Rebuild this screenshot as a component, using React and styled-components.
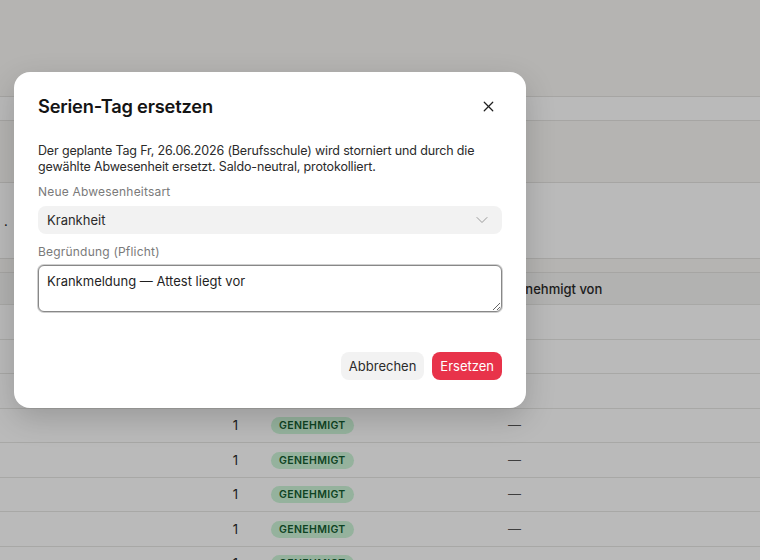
import { X, ChevronDown } from 'lucide-react'
import styled, { createGlobalStyle } from 'styled-components'

const GlobalStyle = createGlobalStyle`
	html, body {
		margin: 0;
		padding: 0;
	}
	body {
		font-family: Inter, 'Noto Sans', 'Liberation Sans', sans-serif;
		color: #1f1f1f;
		-webkit-font-smoothing: antialiased;
	}
	* {
		box-sizing: border-box;
	}
`

const StyledPage = styled.div`
	position: relative;
	width: 760px;
	height: 560px;
	overflow: hidden;
	background: #f8f7f4;
	.Spacer {
		height: 96px;
	}
`

const Strip = styled.div`
	height: ${(p) => p.height}px;
	margin-bottom: ${(p) => p.gap || 0}px;
	background: #ffffff;
	border-top: 1px solid #e4e3e0;
	border-bottom: 1px solid #e4e3e0;
	display: flex;
	align-items: center;
	padding-left: 4px;
	font-size: 13px;
	color: #222;
`

const Table = styled.div`
	background: #ffffff;
	border-top: 1px solid #e4e3e0;
`

const Row = styled.div`
	display: grid;
	grid-template-columns: 256px 236px 1fr;
	align-items: center;
	height: ${(p) => (p.head ? 32 : 34.5)}px;
	background: ${(p) => (p.head ? '#f4f4f3' : '#ffffff')};
	border-bottom: 1px solid #e6e6e4;
	font-size: 13px;
	font-weight: ${(p) => (p.head ? 500 : 400)};
	color: #2a2a2a;
	.num {
		text-align: right;
		padding-right: 18px;
	}
	.status {
		padding-left: 15px;
	}
	.by {
		padding-left: 16px;
		color: ${(p) => (p.head ? '#2a2a2a' : '#555')};
	}
`

const Badge = styled.span`
	display: inline-block;
	padding: 2px 8px;
	border-radius: 999px;
	background: #ccf5d8;
	color: #155c30;
	font-size: 10.5px;
	font-weight: 600;
	letter-spacing: 0.35px;
	line-height: 13px;
`

const Overlay = styled.div`
	position: absolute;
	inset: 0;
	background: rgba(0, 0, 0, 0.27);
`

const Modal = styled.div`
	position: absolute;
	left: 14px;
	top: 72px;
	width: 512px;
	padding: 22px 24px 28px;
	background: #ffffff;
	border-radius: 16px;
	box-shadow: 0 10px 30px rgba(0, 0, 0, 0.18);
`

const TitleBar = styled.div`
	display: flex;
	align-items: center;
	justify-content: space-between;
	h2 {
		margin: 0;
		font-size: 18.3px;
		line-height: 24px;
		font-weight: 600;
		color: #141414;
		letter-spacing: -0.2px;
	}
`

const CloseButton = styled.button`
	display: flex;
	align-items: center;
	justify-content: center;
	width: 24px;
	height: 24px;
	margin-right: 2px;
	padding: 0;
	border: 0;
	background: transparent;
	color: #1f1f1f;
	cursor: pointer;
`

const Description = styled.p`
	margin: 25px 0 9px;
	font-size: 12.5px;
	line-height: 16px;
	letter-spacing: -0.15px;
	color: #2b2b2b;
`

const Label = styled.div`
	margin: ${(p) => p.top || 0}px 0 ${(p) => p.bottom || 6}px;
	font-size: 12px;
	line-height: 16px;
	letter-spacing: 0.2px;
	color: #7a7a7a;
`

const Select = styled.div`
	display: flex;
	align-items: center;
	justify-content: space-between;
	height: 28px;
	padding: 0 10px 0 9px;
	border-radius: 8px;
	background: #f2f2f2;
	font-size: 13px;
	color: #2b2b2b;
	svg {
		color: #9a9a9a;
	}
`

const TextArea = styled.textarea`
	display: block;
	width: 100%;
	height: 47px;
	padding: 6px 8px;
	border: 1px solid #888888;
	border-radius: 6px;
	box-shadow: 0 0 0 1px #cfcfcf;
	outline: none;
	font-family: inherit;
	font-size: 13px;
	line-height: 18px;
	color: #1f1f1f;
	resize: vertical;
`

const Actions = styled.div`
	display: flex;
	justify-content: flex-end;
	gap: 8px;
	margin-top: 40px;
`

const Button = styled.button`
	height: 28px;
	padding: 0 8px;
	border: 0;
	border-radius: 8px;
	font-family: inherit;
	font-size: 13px;
	background: ${(p) => (p.primary ? '#e8334a' : '#f2f2f2')};
	color: ${(p) => (p.primary ? '#ffffff' : '#2b2b2b')};
	cursor: pointer;
`

const rows = [1, 2, 3, 4, 5, 6, 7, 8]

export default function App() {
	return (
		<>
			<GlobalStyle />
			<StyledPage>
				<div className={'Spacer'} />
				<Strip height={25} gap={61} />
				<Strip height={77} gap={13}>
					.
				</Strip>
				<Table>
					<Row head>
						<span className={'num'}>Tage</span>
						<span className={'status'}>Status</span>
						<span className={'by'}>Genehmigt von</span>
					</Row>
					{rows.map((r) => (
						<Row key={r}>
							<span className={'num'}>1</span>
							<span className={'status'}>
								<Badge>GENEHMIGT</Badge>
							</span>
							<span className={'by'}>—</span>
						</Row>
					))}
				</Table>
				<Overlay />
				<Modal>
					<TitleBar>
						<h2>Serien-Tag ersetzen</h2>
						<CloseButton aria-label="Schließen">
							<X size={17} strokeWidth={1.7} />
						</CloseButton>
					</TitleBar>
					<Description>
						Der geplante Tag Fr, 26.06.2026 (Berufsschule) wird storniert und durch die gewählte
						Abwesenheit ersetzt. Saldo-neutral, protokolliert.
					</Description>
					<Label>Neue Abwesenheitsart</Label>
					<Select>
						<span>Krankheit</span>
						<ChevronDown size={20} strokeWidth={1.2} />
					</Select>
					<Label top={10} bottom={5}>
						Begründung (Pflicht)
					</Label>
					<TextArea defaultValue={'Krankmeldung — Attest liegt vor'} />
					<Actions>
						<Button>Abbrechen</Button>
						<Button primary>Ersetzen</Button>
					</Actions>
				</Modal>
			</StyledPage>
		</>
	)
}
